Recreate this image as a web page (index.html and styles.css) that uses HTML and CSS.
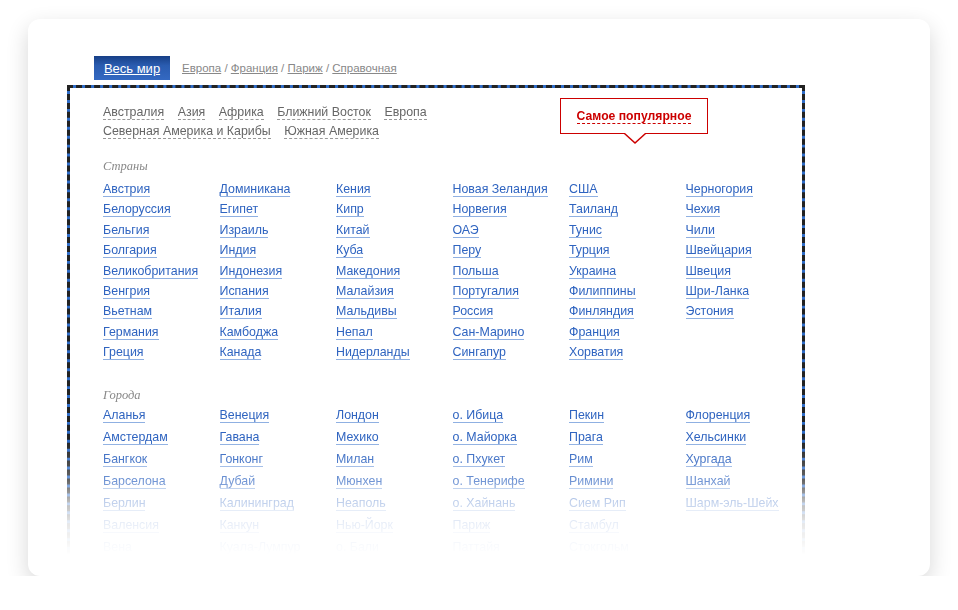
FILE: index.html
```html
<!DOCTYPE html>
<html lang="ru">
<head>
    <meta charset="UTF-8">
    <title>Справочная</title>
    <link rel="stylesheet" href="styles.css">
</head>
<body>
    <div class="card">
        <div class="crumbs">
            <a class="world" href="#">Весь мир</a>
            <span class="path">
                <a href="#">Европа</a> / <a href="#">Франция</a> / <a href="#">Париж</a> / <a href="#">Справочная</a>
            </span>
        </div>

        <div class="box">
            <div class="regions">
                <a href="#">Австралия</a>
                <a href="#">Азия</a>
                <a href="#">Африка</a>
                <a href="#">Ближний Восток</a>
                <a href="#">Европа</a>
                <br>
                <a href="#">Северная Америка и Карибы</a>
                <a href="#">Южная Америка</a>
            </div>

            <div class="popular">
                <a href="#">Самое популярное</a>
            </div>

            <h3>Страны</h3>
            <div class="list countries">
                <a href="#">Австрия</a>
                <a href="#">Белоруссия</a>
                <a href="#">Бельгия</a>
                <a href="#">Болгария</a>
                <a href="#">Великобритания</a>
                <a href="#">Венгрия</a>
                <a href="#">Вьетнам</a>
                <a href="#">Германия</a>
                <a href="#">Греция</a>

                <a href="#">Доминикана</a>
                <a href="#">Египет</a>
                <a href="#">Израиль</a>
                <a href="#">Индия</a>
                <a href="#">Индонезия</a>
                <a href="#">Испания</a>
                <a href="#">Италия</a>
                <a href="#">Камбоджа</a>
                <a href="#">Канада</a>

                <a href="#">Кения</a>
                <a href="#">Кипр</a>
                <a href="#">Китай</a>
                <a href="#">Куба</a>
                <a href="#">Македония</a>
                <a href="#">Малайзия</a>
                <a href="#">Мальдивы</a>
                <a href="#">Непал</a>
                <a href="#">Нидерланды</a>

                <a href="#">Новая Зеландия</a>
                <a href="#">Норвегия</a>
                <a href="#">ОАЭ</a>
                <a href="#">Перу</a>
                <a href="#">Польша</a>
                <a href="#">Португалия</a>
                <a href="#">Россия</a>
                <a href="#">Сан-Марино</a>
                <a href="#">Сингапур</a>

                <a href="#">США</a>
                <a href="#">Таиланд</a>
                <a href="#">Тунис</a>
                <a href="#">Турция</a>
                <a href="#">Украина</a>
                <a href="#">Филиппины</a>
                <a href="#">Финляндия</a>
                <a href="#">Франция</a>
                <a href="#">Хорватия</a>

                <a href="#">Черногория</a>
                <a href="#">Чехия</a>
                <a href="#">Чили</a>
                <a href="#">Швейцария</a>
                <a href="#">Швеция</a>
                <a href="#">Шри-Ланка</a>
                <a href="#">Эстония</a>
            </div>

            <h3 class="cities-title">Города</h3>
            <div class="list cities">
                <a href="#">Аланья</a>
                <a href="#">Амстердам</a>
                <a href="#">Бангкок</a>
                <a href="#">Барселона</a>
                <a href="#">Берлин</a>
                <a href="#">Валенсия</a>
                <a href="#">Вена</a>

                <a href="#">Венеция</a>
                <a href="#">Гавана</a>
                <a href="#">Гонконг</a>
                <a href="#">Дубай</a>
                <a href="#">Калининград</a>
                <a href="#">Канкун</a>
                <a href="#">Куала-Лумпур</a>

                <a href="#">Лондон</a>
                <a href="#">Мехико</a>
                <a href="#">Милан</a>
                <a href="#">Мюнхен</a>
                <a href="#">Неаполь</a>
                <a href="#">Нью-Йорк</a>
                <a href="#">о. Бали</a>

                <a href="#">о. Ибица</a>
                <a href="#">о. Майорка</a>
                <a href="#">о. Пхукет</a>
                <a href="#">о. Тенерифе</a>
                <a href="#">о. Хайнань</a>
                <a href="#">Париж</a>
                <a href="#">Паттайя</a>

                <a href="#">Пекин</a>
                <a href="#">Прага</a>
                <a href="#">Рим</a>
                <a href="#">Римини</a>
                <a href="#">Сием Рип</a>
                <a href="#">Стамбул</a>
                <a href="#">Стокгольм</a>

                <a href="#">Флоренция</a>
                <a href="#">Хельсинки</a>
                <a href="#">Хургада</a>
                <a href="#">Шанхай</a>
                <a href="#">Шарм-эль-Шейх</a>
            </div>
        </div>
    </div>
</body>
</html>
```

FILE: styles.css
```css
/* Page */
html {
    background-color: white;
}

body {
    margin: 0;
    padding: 19px 28px 0;
    font-family: "Liberation Sans", Arial, sans-serif;
    color: #333;
}

/* White card with soft shadow */
.card {
    height: 557px;
    box-sizing: border-box;
    padding: 37px 0 0 39px;
    background-color: white;
    border-radius: 12px;
    box-shadow: 0 8px 22px rgba(0, 0, 0, 0.16);
    overflow: hidden;
}

/* Breadcrumbs */
.crumbs {
    display: flex;
    align-items: center;
    margin-left: 27px;
    height: 24px;
}

.world {
    display: flex;
    align-items: center;
    justify-content: center;
    width: 76px;
    height: 24px;
    background: linear-gradient(to bottom, #173f86 0%, #2a5cb0 40%, #3469c2 100%);
    color: white;
    font-size: 13px;
    text-decoration: underline;
}

.path {
    margin-left: 12px;
    font-size: 11.5px;
    color: #888;
}

.path a {
    color: #888;
}

/* Dashed frame */
.box {
    position: relative;
    width: 738px;
    height: 480px;
    box-sizing: border-box;
    margin-top: 5px;
    padding: 15px 0 0 33px;
    border: 3px dashed #222;
    border-bottom: none;
    background: linear-gradient(white, white) padding-box, #2f6dc9 border-box;
    overflow: hidden;
    -webkit-mask-image: linear-gradient(to bottom, black 355px, rgba(0, 0, 0, 0.7) 395px, rgba(0, 0, 0, 0.3) 417px, rgba(0, 0, 0, 0.1) 440px, transparent 470px);
    mask-image: linear-gradient(to bottom, black 355px, rgba(0, 0, 0, 0.7) 395px, rgba(0, 0, 0, 0.3) 417px, rgba(0, 0, 0, 0.1) 440px, transparent 470px);
}

.regions {
    font-size: 12.4px;
    line-height: 19px;
}

.regions a {
    color: #666;
    text-decoration: none;
    border-bottom: 1px dashed #999;
    margin-right: 10px;
}

/* Callout */
.popular {
    position: absolute;
    left: 490px;
    top: 10px;
    width: 148px;
    height: 36px;
    box-sizing: border-box;
    border: 1px solid #cc0000;
    display: flex;
    align-items: center;
    justify-content: center;
}

.popular::before,
.popular::after {
    content: "";
    position: absolute;
    border-style: solid;
    border-color: transparent;
}

.popular::before {
    left: 63px;
    top: 35px;
    border-width: 10px 11px 0;
    border-top-color: #cc0000;
}

.popular::after {
    left: 64px;
    top: 34px;
    border-width: 9px 10px 0;
    border-top-color: white;
}

.popular a {
    color: #cc0000;
    font-weight: bold;
    font-size: 12.2px;
    text-decoration: none;
    border-bottom: 1px dashed #cc0000;
}

/* Section titles */
h3 {
    margin: 18px 0 0;
    font-family: "Liberation Serif", Georgia, serif;
    font-style: italic;
    font-weight: normal;
    font-size: 12.5px;
    line-height: 14px;
    color: #888;
}

.cities-title {
    margin-top: 22px;
}

/* Link grids */
.list {
    display: grid;
    grid-auto-flow: column;
    grid-template-columns: repeat(6, 116.5px);
    justify-items: start;
    font-size: 12.4px;
}

.countries {
    margin-top: 9px;
    grid-template-rows: repeat(9, 20.4px);
}

.cities {
    margin-top: 6px;
    grid-template-rows: repeat(7, 22px);
}

.list a {
    color: #2f64c0;
    text-decoration: none;
    border-bottom: 1px solid #8fb0e2;
    line-height: 14px;
    align-self: start;
}
```
